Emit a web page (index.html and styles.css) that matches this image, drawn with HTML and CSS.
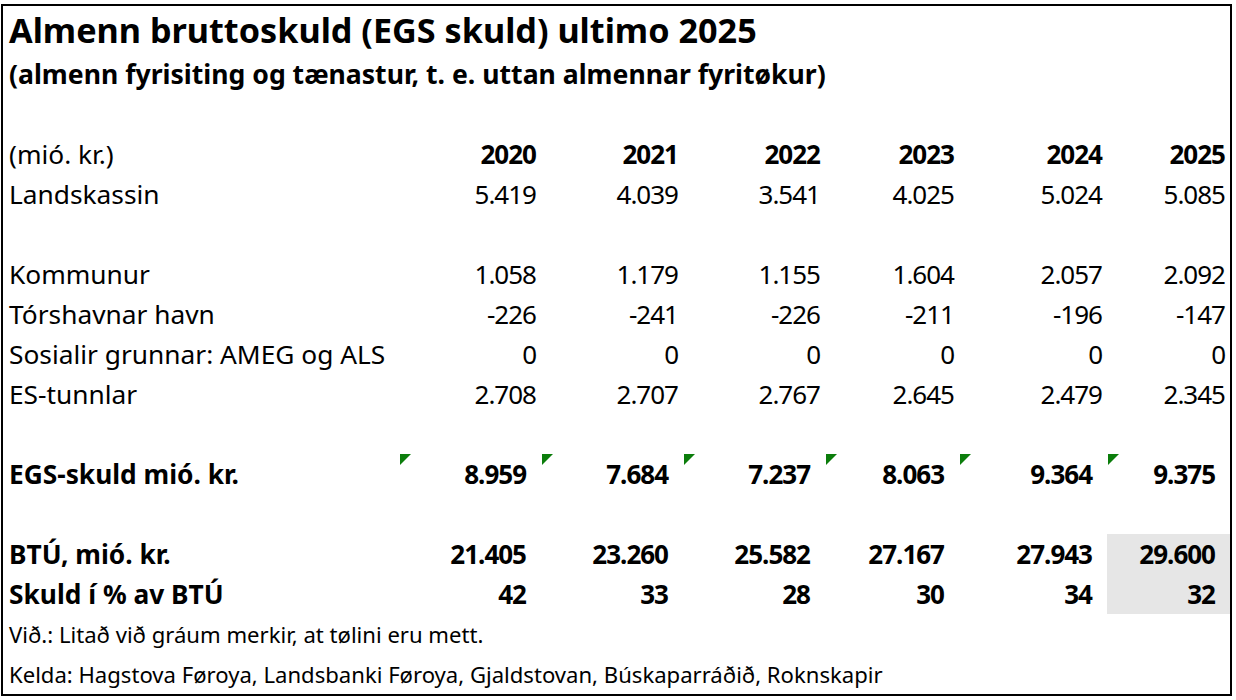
FILE: index.html
```html
<!DOCTYPE html>
<html lang="fo">
<head>
<meta charset="utf-8">
<title>Almenn bruttoskuld</title>
<link rel="stylesheet" href="styles.css">
</head>
<body>
<div class="sheet">
  <div class="title span">Almenn bruttoskuld (EGS skuld) ultimo 2025</div>
  <div class="subtitle span">(almenn fyrisiting og tænastur, t. e. uttan almennar fyritøkur)</div>
  <div class="blank span"></div>

  <div class="label">(mió. kr.)</div>
  <div class="num b">2020</div><div class="num b">2021</div><div class="num b">2022</div><div class="num b">2023</div><div class="num b">2024</div><div class="num b">2025</div>

  <div class="label">Landskassin</div>
  <div class="num">5.419</div><div class="num">4.039</div><div class="num">3.541</div><div class="num">4.025</div><div class="num">5.024</div><div class="num">5.085</div>

  <div class="blank span"></div>

  <div class="label">Kommunur</div>
  <div class="num">1.058</div><div class="num">1.179</div><div class="num">1.155</div><div class="num">1.604</div><div class="num">2.057</div><div class="num">2.092</div>

  <div class="label">Tórshavnar havn</div>
  <div class="num">-226</div><div class="num">-241</div><div class="num">-226</div><div class="num">-211</div><div class="num">-196</div><div class="num">-147</div>

  <div class="label">Sosialir grunnar: AMEG og ALS</div>
  <div class="num">0</div><div class="num">0</div><div class="num">0</div><div class="num">0</div><div class="num">0</div><div class="num">0</div>

  <div class="label">ES-tunnlar</div>
  <div class="num">2.708</div><div class="num">2.707</div><div class="num">2.767</div><div class="num">2.645</div><div class="num">2.479</div><div class="num">2.345</div>

  <div class="blank span"></div>

  <div class="label b">EGS-skuld mió. kr.</div>
  <div class="num b ind flag">8.959</div><div class="num b ind flag">7.684</div><div class="num b ind flag">7.237</div><div class="num b ind flag">8.063</div><div class="num b ind flag">9.364</div><div class="num b ind flag">9.375</div>

  <div class="blank span"></div>

  <div class="label b">BTÚ, mió. kr.</div>
  <div class="num b ind">21.405</div><div class="num b ind">23.260</div><div class="num b ind">25.582</div><div class="num b ind">27.167</div><div class="num b ind">27.943</div><div class="num b ind est">29.600</div>

  <div class="label b">Skuld í % av BTÚ</div>
  <div class="num b ind">42</div><div class="num b ind">33</div><div class="num b ind">28</div><div class="num b ind">30</div><div class="num b ind">34</div><div class="num b ind est">32</div>

  <div class="note span">Við.: Litað við gráum merkir, at tølini eru mett.</div>
  <div class="note span">Kelda: Hagstova Føroya, Landsbanki Føroya, Gjaldstovan, Búskaparráðið, Roknskapir</div>
</div>
</body>
</html>
```

FILE: styles.css
```css
html, body {
  margin: 0;
  padding: 0;
  background: #ffffff;
}
body {
  font-family: "Noto Sans", "Open Sans", "DejaVu Sans", sans-serif;
  color: #000;
}
.sheet {
  margin: 4px 0 0 1px;
  width: 1227px;
  border: 2px solid #000;
  display: grid;
  grid-template-columns: 396px 142px 142px 142px 134px 148px 123px;
  grid-template-rows: 48px;
  grid-auto-rows: 40px;
  font-size: 26.3px;
}
.span {
  grid-column: 1 / -1;
}
.title {
  font-size: 34.2px;
  font-weight: 700;
  line-height: 48px;
  padding-left: 6px;
  white-space: nowrap;
}
.subtitle {
  font-size: 26.6px;
  font-weight: 700;
  line-height: 40px;
  padding-left: 6px;
  white-space: nowrap;
}
.label {
  padding-left: 6px;
  line-height: 40px;
  white-space: nowrap;
}
.num {
  position: relative;
  text-align: right;
  padding-right: 5px;
  line-height: 40px;
  font-size: 26px;
  letter-spacing: -1px;
}
.b {
  font-weight: 700;
}
.ind {
  padding-right: 15px;
}
.est {
  background: #e6e6e6;
}
.flag::before {
  content: "";
  position: absolute;
  left: 1px;
  top: 0;
  width: 0;
  height: 0;
  border-top: 11px solid #0b7d0b;
  border-right: 11px solid transparent;
}
.note {
  font-size: 22.1px;
  line-height: 40px;
  padding-left: 6px;
  white-space: nowrap;
}
```
